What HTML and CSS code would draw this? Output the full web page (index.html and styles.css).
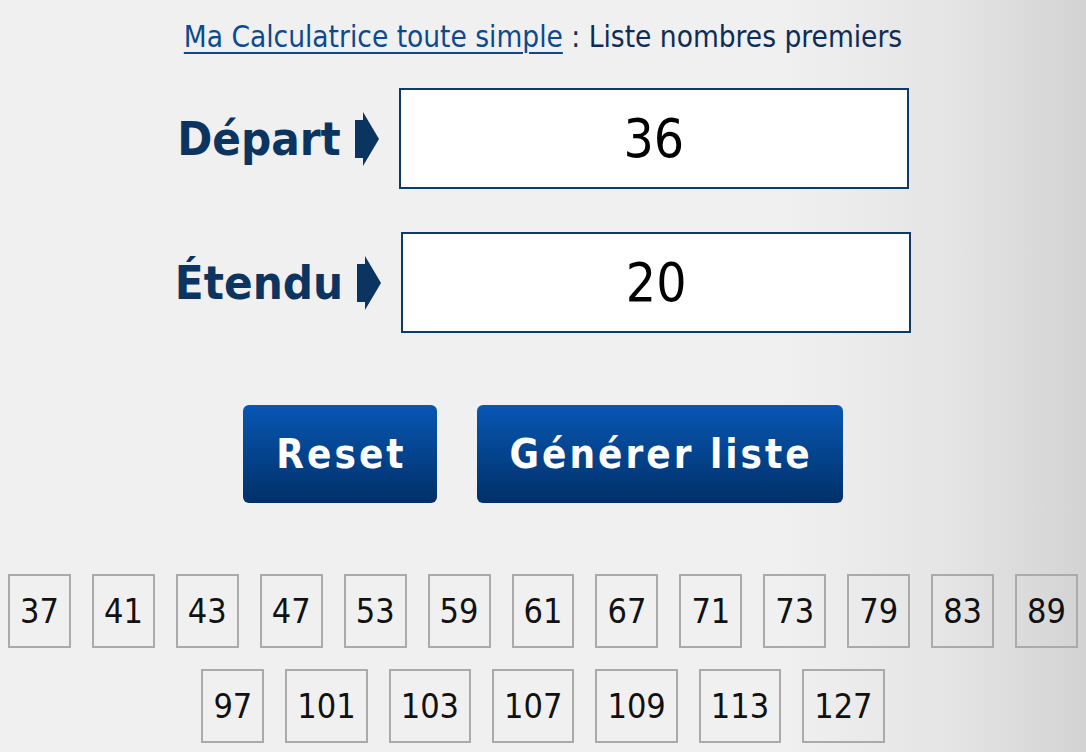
FILE: index.html
```html
<!DOCTYPE html>
<html lang="fr">
<head>
    <meta charset="UTF-8">
    <meta name="viewport" content="width=device-width, initial-scale=1.0">
    <title>Liste nombres premiers</title>
    <link rel="stylesheet" href="styles.css">
</head>
<body>

    <div class="page">
        <h1 class="title"><a href="#">Ma Calculatrice toute simple</a> : Liste nombres premiers</h1>

        <form id="primeForm">
            <div class="field-row">
                <label for="depart">Départ</label>
                <svg class="arrow" width="24" height="54" viewBox="0 0 24 54"><polygon points="0,8 8,8 8,0 24,27 8,54 8,46 0,46"/></svg>
                <input type="text" id="depart" name="depart" value="36">
            </div>

            <div class="field-row second">
                <label for="etendu">Étendu</label>
                <svg class="arrow" width="24" height="54" viewBox="0 0 24 54"><polygon points="0,8 8,8 8,0 24,27 8,54 8,46 0,46"/></svg>
                <input type="text" id="etendu" name="etendu" value="20">
            </div>

            <div class="form-actions">
                <button type="reset" class="action-button">Reset</button>
                <button type="submit" class="action-button">Générer liste</button>
            </div>
        </form>

        <div class="prime-list" id="primeList">
            <span class="prime">37</span>
            <span class="prime">41</span>
            <span class="prime">43</span>
            <span class="prime">47</span>
            <span class="prime">53</span>
            <span class="prime">59</span>
            <span class="prime">61</span>
            <span class="prime">67</span>
            <span class="prime">71</span>
            <span class="prime">73</span>
            <span class="prime">79</span>
            <span class="prime">83</span>
            <span class="prime">89</span>
            <span class="prime">97</span>
            <span class="prime">101</span>
            <span class="prime">103</span>
            <span class="prime">107</span>
            <span class="prime">109</span>
            <span class="prime">113</span>
            <span class="prime">127</span>
        </div>
    </div>

</body>
</html>
```

FILE: styles.css
```css
body {
    font-family: 'DejaVu Sans Condensed', 'Liberation Sans', sans-serif;
    margin: 0;
    min-height: 100vh;
    background: linear-gradient(to right, #f0f0f0 0%, #f0f0f0 72%, #e4e4e4 88%, #d3d3d3 100%);
}

.page {
    text-align: center;
    padding-top: 17px;
}

.title {
    font-size: 29.5px;
    font-weight: normal;
    line-height: 41px;
    color: #0c2d57;
    margin: 0 0 30px 0;
}

.title a {
    color: #0b4a8f;
    text-decoration: underline;
    text-decoration-thickness: 2px;
    text-underline-offset: 5px;
}

.field-row {
    display: flex;
    justify-content: center;
    align-items: center;
}

.field-row.second {
    margin-top: 43px;
}

.field-row label {
    font-size: 47px;
    font-weight: bold;
    color: #0c3461;
    margin-right: 14px;
}

.arrow {
    fill: #0c3461;
    margin-right: 20px;
}

.field-row input {
    box-sizing: border-box;
    width: 510px;
    height: 101px;
    border: 2px solid #0d3a66;
    background-color: #ffffff;
    font-family: inherit;
    font-size: 53px;
    color: #000;
    text-align: center;
    outline: none;
    padding: 0;
}

.form-actions {
    display: flex;
    justify-content: center;
    gap: 40px;
    margin-top: 72px;
}

.action-button {
    height: 98px;
    padding: 0 30px 0 33px;
    border: none;
    border-radius: 6px;
    background: linear-gradient(to bottom, #0857b3, #003068);
    color: white;
    font-family: inherit;
    font-size: 40px;
    font-weight: bold;
    letter-spacing: 3px;
    cursor: pointer;
}

.prime-list {
    display: flex;
    flex-wrap: wrap;
    justify-content: center;
    gap: 21px;
    margin-top: 71px;
    padding: 0 8px;
}

.prime {
    box-sizing: border-box;
    height: 74px;
    line-height: 70px;
    padding: 0 10px;
    border: 2px solid #aaaaaa;
    font-size: 34px;
    color: #111;
}
```
